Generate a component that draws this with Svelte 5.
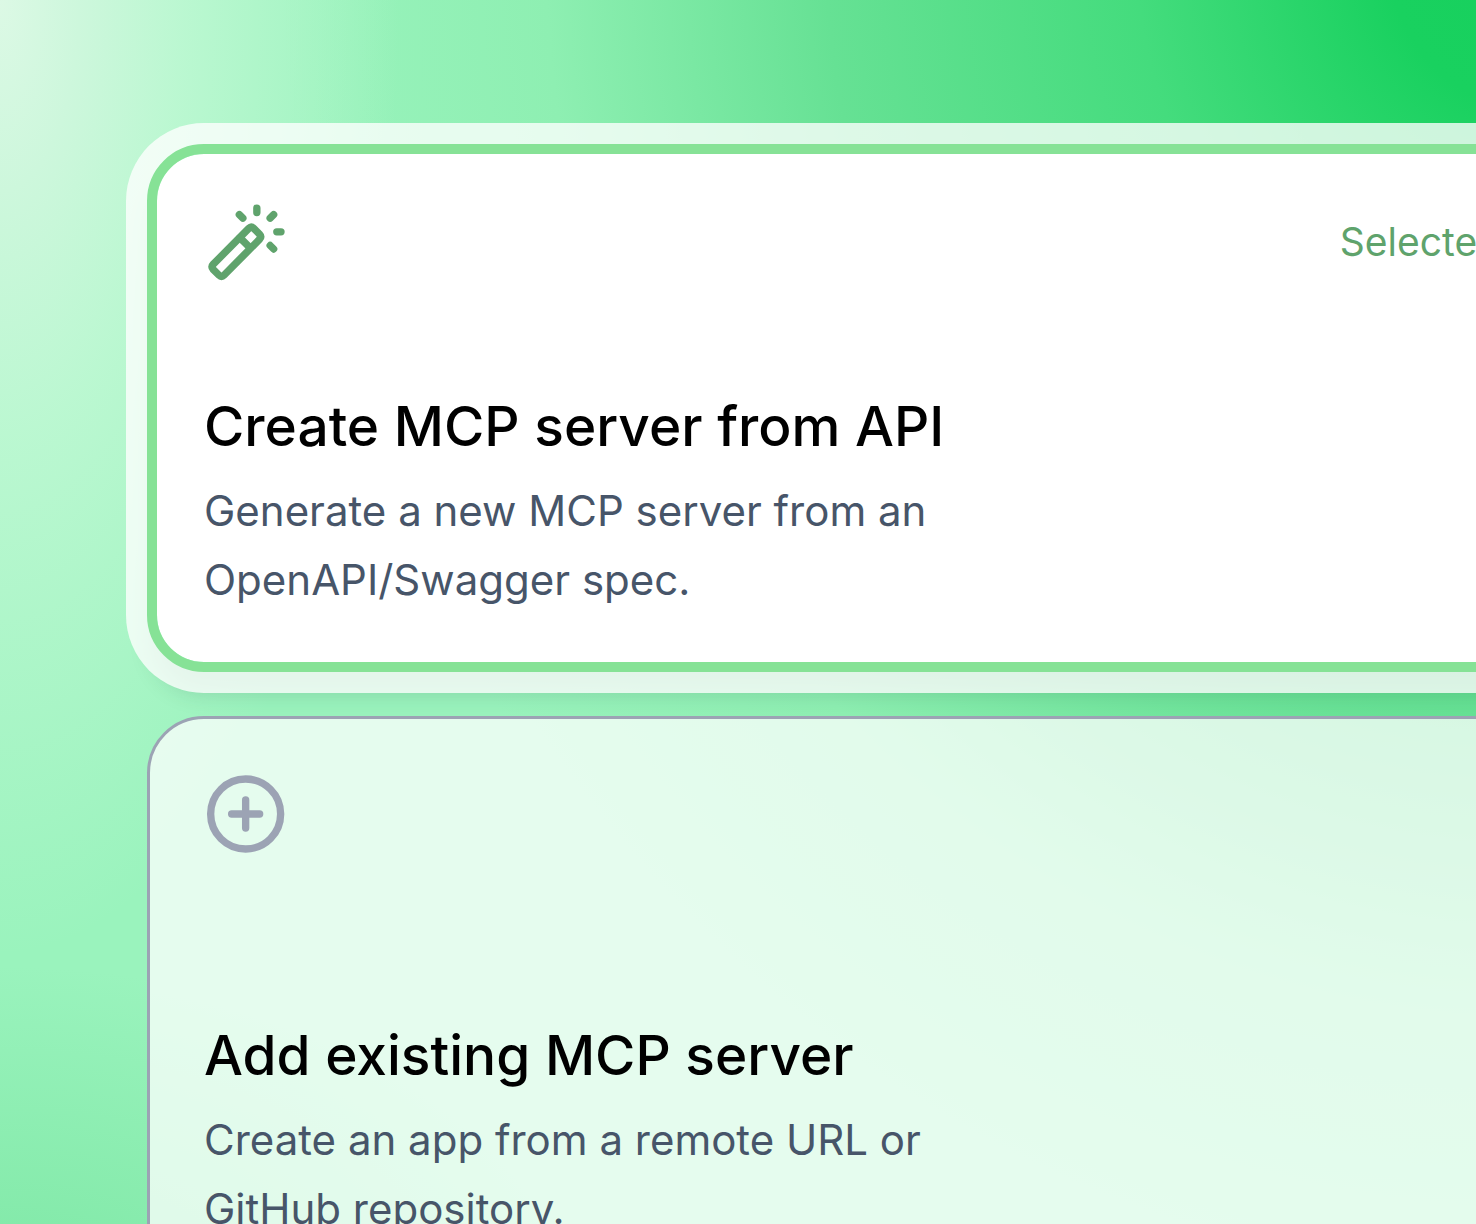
<script lang="ts">
  type Option = {
    id: string;
    icon: "wand" | "plus";
    title: string;
    text: string;
  };

  const options: Option[] = [
    {
      id: "api",
      icon: "wand",
      title: "Create MCP server from API",
      text: "Generate a new MCP server from an OpenAPI/Swagger spec.",
    },
    {
      id: "existing",
      icon: "plus",
      title: "Add existing MCP server",
      text: "Create an app from a remote URL or GitHub repository.",
    },
  ];

  let selected = $state("api");
</script>

<main class="page">
  <div class="options">
    {#each options as option (option.id)}
      {@const isSelected = selected === option.id}
      <button
        class="card"
        class:selected={isSelected}
        aria-pressed={isSelected}
        onclick={() => (selected = option.id)}
      >
        <span class="top">
          <svg class="icon" viewBox="0 0 24 24" aria-hidden="true">
            {#if option.icon === "wand"}
              <path d="M12.8 8.1 2.6 18.4q-.7.7 0 1.4l1.7 1.7q.7.7 1.4 0L15.9 11.2q.7-.7 0-1.4L14.2 8.1q-.7-.7-1.4 0Z" />
              <path d="m10.3 10.8 2.8 2.8" />
              <path d="M15.1 2.3v1.3M20.8 9.1h1.2M18.9 5.2l1-1M18.9 13l1 1M11.1 5.2l-1-1" />
            {:else}
              <circle cx="11.9" cy="12" r="10" />
              <path d="M7.9 12h8M11.9 8v8" />
            {/if}
          </svg>
          {#if isSelected}
            <span class="badge">Selected</span>
          {/if}
        </span>
        <span class="body">
          <span class="title">{option.title}</span>
          <span class="text">{option.text}</span>
        </span>
      </button>
    {/each}
  </div>
</main>

<style>
  :global(body) {
    margin: 0;
  }

  .page {
    box-sizing: border-box;
    height: 100vh;
    padding: 144px 0 0 147px;
    overflow: hidden;
    font-family: Inter, "Liberation Sans", sans-serif;
    background:
      radial-gradient(ellipse 27% 78% at 0 0, #dcf9e5 0, #cdf7dc 20%, rgba(190, 248, 211, 0.9) 46%, rgba(154, 245, 190, 0) 100%),
      radial-gradient(ellipse 100% 130% at 104% -4%, #17d05d 0, #19d15f 10%, #44dc7d 27%, #66e194 48%, #8eefb2 67%, rgba(154, 245, 190, 0) 85%),
      radial-gradient(ellipse 600px 380px at 0 110%, #7ae6a2 0, rgba(122, 230, 162, 0) 100%),
      #9af3bd;
  }

  .options {
    display: flex;
    flex-direction: column;
    gap: 44px;
    margin-right: -82px;
  }

  .card {
    box-sizing: border-box;
    display: flex;
    flex-direction: column;
    justify-content: space-between;
    min-height: 585px;
    padding: 53px 54px 55px;
    border: 3px solid #9ca3b4;
    border-radius: 57px;
    background: rgba(255, 255, 255, 0.74);
    color: #9ca3b4;
    font-family: inherit;
    text-align: left;
    cursor: pointer;
  }

  .card.selected {
    min-height: 528px;
    padding: 46px 47px 48px;
    border: 10px solid #86e296;
    background: #fff;
    background-clip: padding-box;
    color: #5fa36c;
    box-shadow:
      0 0 0 21px rgba(255, 255, 255, 0.78),
      0 26px 24px -6px rgba(30, 60, 50, 0.18);
  }

  .top {
    display: flex;
    align-items: center;
    justify-content: space-between;
  }

  .icon {
    width: 84px;
    height: 84px;
    fill: none;
    stroke: currentColor;
    stroke-width: 2.1;
    stroke-linecap: round;
    stroke-linejoin: round;
  }

  .badge {
    font-size: 39px;
    line-height: 56px;
  }

  .body {
    display: flex;
    flex-direction: column;
    gap: 16px;
    max-width: 780px;
  }

  .title {
    color: #000;
    font-size: 55px;
    font-weight: 500;
    line-height: 68px;
  }

  .text {
    color: #475569;
    font-size: 42px;
    line-height: 69px;
  }
</style>
